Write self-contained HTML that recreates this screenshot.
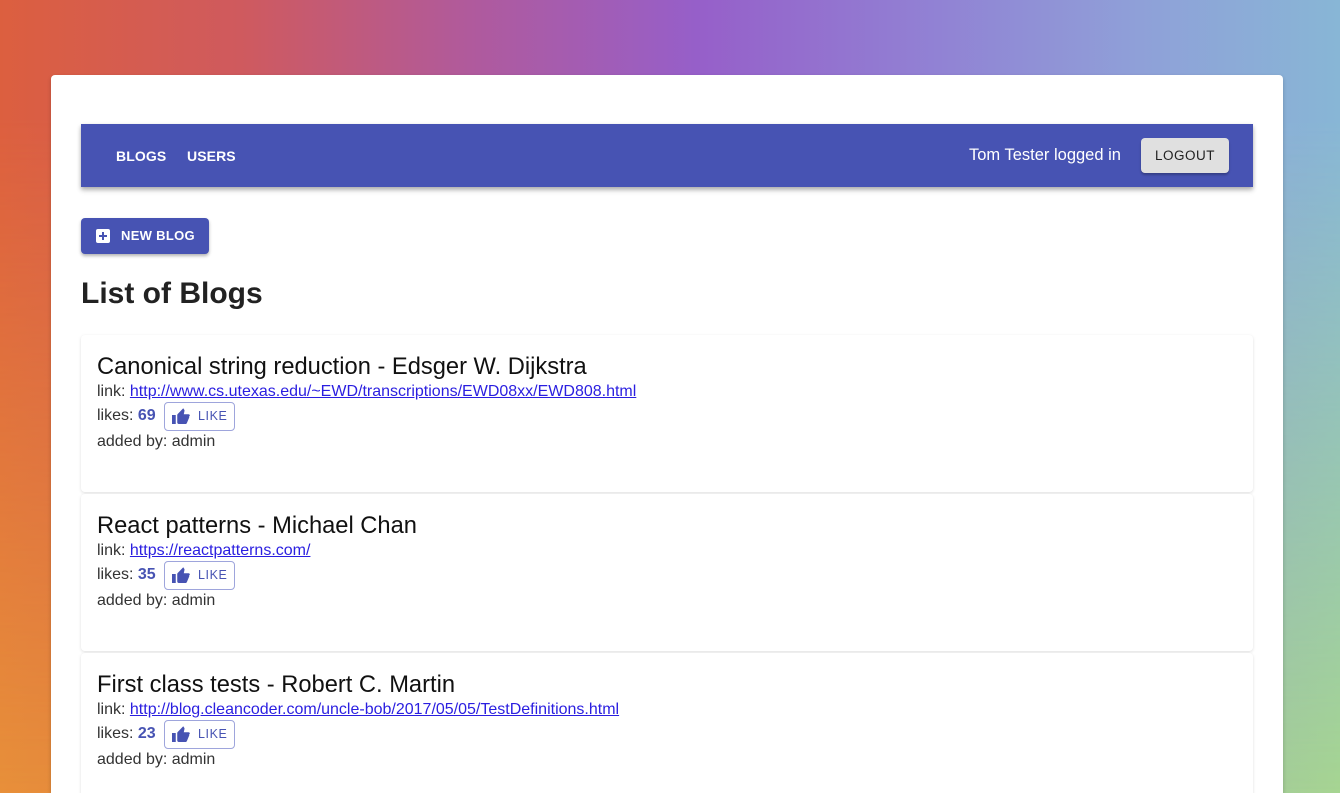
<!DOCTYPE html>
<html><head><style>
html,body{margin:0;padding:0;width:1340px;height:793px;overflow:hidden;font-family:"Liberation Sans",Arial,sans-serif;}
body{position:relative;background:linear-gradient(to right,#e8903a 0%,#d9704a 40%,#a0a8b0 70%,#a6d592 100%);}
body:before{content:"";position:absolute;inset:0;background:linear-gradient(to right,#dc5f3f 0%,#cf5a5e 18%,#b05a9c 35%,#965fc9 52%,#9182d4 70%,#8fa0d8 85%,#88b6d6 100%);-webkit-mask-image:linear-gradient(to bottom,#000 0%,#000 15%,transparent 100%);mask-image:linear-gradient(to bottom,#000 0%,#000 15%,transparent 100%);}
.main{position:absolute;left:51px;top:75px;width:1232px;height:718px;background:#fff;border-radius:4px 4px 0 0;box-shadow:0 2px 4px rgba(0,0,0,.2);overflow:hidden}
.nav{position:absolute;left:30px;top:49px;width:1172px;height:63px;background:#4753b3;box-shadow:0 2px 4px rgba(0,0,0,.25),0 4px 5px rgba(0,0,0,.12);color:#fff;}
.nav .l{position:absolute;top:24px;font-size:14px;font-weight:bold;letter-spacing:.1px}
.nav .who{position:absolute;left:888px;top:22px;font-size:16.5px}
.logout{position:absolute;left:1060px;top:14px;width:88px;height:35px;background:#e0e0e0;border-radius:4px;box-shadow:0 2px 2px rgba(0,0,0,.25);color:#222;font-size:13.5px;text-align:center;line-height:35px;letter-spacing:.5px}
.nb{position:absolute;left:30px;top:143px;width:128px;height:36px;background:#4753b3;border-radius:4px;box-shadow:0 2px 3px rgba(0,0,0,.3);color:#fff;font-size:13px;font-weight:bold;line-height:36px;letter-spacing:.3px}
.nb i{position:absolute;left:15px;top:11px;width:14px;height:14px;background:#fff;border-radius:2px}
.nb i:before{content:"";position:absolute;left:6px;top:3px;width:2px;height:8px;background:#4753b3}
.nb i:after{content:"";position:absolute;left:3px;top:6px;width:8px;height:2px;background:#4753b3}
.nb span{position:absolute;left:40px}
h1{position:absolute;left:30px;top:202px;margin:0;font-size:30px;font-weight:bold;color:#222}
.card{position:absolute;left:30px;width:1172px;height:157px;background:#fff;border-radius:4px;box-shadow:0 1px 3px rgba(0,0,0,.13);}
.card .t{position:absolute;left:16px;top:19px;font-size:23.7px;color:#111}
.card .k{position:absolute;left:16px;top:48px;font-size:16px;color:#333}
.card .k a{color:#2a1ee0;text-decoration:underline}
.card .lk{position:absolute;left:16px;top:72px;font-size:16px;color:#333}
.card .lk b{color:#4753b3}
.like{position:absolute;left:83px;top:67px;width:71px;height:29px;border:1px solid #9ea5dc;border-radius:4px;box-sizing:border-box;color:#4753b3;font-size:12.5px;line-height:27px;letter-spacing:.6px}
.like svg{position:absolute;left:7px;top:5px}
.like span{position:absolute;left:33px}
.card .ad{position:absolute;left:16px;top:98px;font-size:16px;color:#333}
</style></head><body>
<div class="main">
<div class="nav"><span class="l" style="left:35px">BLOGS</span><span class="l" style="left:106px">USERS</span><span class="who">Tom Tester logged in</span><div class="logout">LOGOUT</div></div>
<div class="nb"><i></i><span>NEW BLOG</span></div>
<h1>List of Blogs</h1>
<div class="card" style="top:260px"><div class="t">Canonical string reduction - Edsger W. Dijkstra</div><div class="k">link: <a>http://www.cs.utexas.edu/~EWD/transcriptions/EWD08xx/EWD808.html</a></div><div class="lk">likes: <b>69</b></div><div class="like"><svg width="18" height="17" viewBox="0 0 24 22"><path fill="#4753b3" d="M0 21h5V9H0v12zm24-11c0-1.1-.9-2-2-2h-6.3l1-4.6v-.3c0-.4-.2-.8-.4-1.1L15 0 7.6 7.6C7.2 7.9 7 8.4 7 9v10c0 1.1.9 2 2 2h9c.8 0 1.5-.5 1.8-1.2l3-7.1c.1-.2.2-.5.2-.7v-2z"/></svg><span>LIKE</span></div><div class="ad">added by: admin</div></div>
<div class="card" style="top:419px"><div class="t">React patterns - Michael Chan</div><div class="k">link: <a>https://reactpatterns.com/</a></div><div class="lk">likes: <b>35</b></div><div class="like"><svg width="18" height="17" viewBox="0 0 24 22"><path fill="#4753b3" d="M0 21h5V9H0v12zm24-11c0-1.1-.9-2-2-2h-6.3l1-4.6v-.3c0-.4-.2-.8-.4-1.1L15 0 7.6 7.6C7.2 7.9 7 8.4 7 9v10c0 1.1.9 2 2 2h9c.8 0 1.5-.5 1.8-1.2l3-7.1c.1-.2.2-.5.2-.7v-2z"/></svg><span>LIKE</span></div><div class="ad">added by: admin</div></div>
<div class="card" style="top:578px"><div class="t">First class tests - Robert C. Martin</div><div class="k">link: <a>http://blog.cleancoder.com/uncle-bob/2017/05/05/TestDefinitions.html</a></div><div class="lk">likes: <b>23</b></div><div class="like"><svg width="18" height="17" viewBox="0 0 24 22"><path fill="#4753b3" d="M0 21h5V9H0v12zm24-11c0-1.1-.9-2-2-2h-6.3l1-4.6v-.3c0-.4-.2-.8-.4-1.1L15 0 7.6 7.6C7.2 7.9 7 8.4 7 9v10c0 1.1.9 2 2 2h9c.8 0 1.5-.5 1.8-1.2l3-7.1c.1-.2.2-.5.2-.7v-2z"/></svg><span>LIKE</span></div><div class="ad">added by: admin</div></div>
</div>
</body></html>
